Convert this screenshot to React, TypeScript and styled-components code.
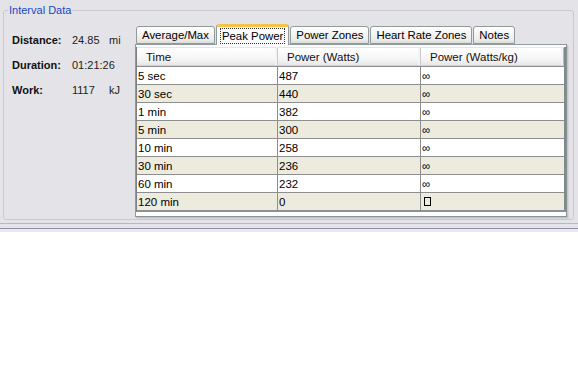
import React from "react";
import styled, { createGlobalStyle } from "styled-components";

const GlobalStyle = createGlobalStyle`
  html, body {
    margin: 0;
    padding: 0;
    background: #ffffff;
  }
  body {
    font-family: "Liberation Sans", Arial, sans-serif;
    font-size: 12px;
    color: #000;
  }
`;

const rows = [
  { time: "5 sec", watts: "487", perKg: "∞" },
  { time: "30 sec", watts: "440", perKg: "∞" },
  { time: "1 min", watts: "382", perKg: "∞" },
  { time: "5 min", watts: "300", perKg: "∞" },
  { time: "10 min", watts: "258", perKg: "∞" },
  { time: "30 min", watts: "236", perKg: "∞" },
  { time: "60 min", watts: "232", perKg: "∞" },
  { time: "120 min", watts: "0", perKg: null },
];

const tabs = ["Average/Max", "Peak Power", "Power Zones", "Heart Rate Zones", "Notes"];

const stats = [
  { label: "Distance:", value: "24.85", unit: "mi" },
  { label: "Duration:", value: "01:21:26", unit: "" },
  { label: "Work:", value: "1117", unit: "kJ" },
];

export default function App() {
  return (
    <>
      <GlobalStyle />
      <Page>
        <Top>
          <Group>
            <Legend>Interval Data</Legend>
            <Body>
              <Stats>
                {stats.map((s) => (
                  <StatRow key={s.label}>
                    <StatLabel>{s.label}</StatLabel>
                    <StatValue>{s.value}</StatValue>
                    <StatUnit>{s.unit}</StatUnit>
                  </StatRow>
                ))}
              </Stats>
              <TabControl>
                <TabStrip>
                  {tabs.map((t) => (
                    <Tab key={t} $active={t === "Peak Power"}>
                      <TabText $active={t === "Peak Power"}>{t}</TabText>
                    </Tab>
                  ))}
                </TabStrip>
                <TabPanel>
                  <Grid>
                    <HeaderRow>
                      <HeadCell>Time</HeadCell>
                      <HeadCell>Power (Watts)</HeadCell>
                      <HeadCell>Power (Watts/kg)</HeadCell>
                    </HeaderRow>
                    {rows.map((r, i) => (
                      <Row key={r.time} $alt={i % 2 === 1}>
                        <Cell>{r.time}</Cell>
                        <Cell>{r.watts}</Cell>
                        <Cell>{r.perKg ?? <Tofu />}</Cell>
                      </Row>
                    ))}
                  </Grid>
                </TabPanel>
              </TabControl>
            </Body>
          </Group>
        </Top>
        <Splitter />
      </Page>
    </>
  );
}

const Page = styled.div`
  width: 578px;
  height: 384px;
  background: #fff;
`;

const Top = styled.div`
  background: #e4e4e8;
  padding: 3px 4px 3px 3px;
`;

const Group = styled.fieldset`
  margin: 0;
  padding: 0 6px 4px 8px;
  border: 1px solid #c9c9cf;
  border-radius: 3px;
  min-width: 0;
  height: 211px;
  box-sizing: content-box;
`;

const Legend = styled.legend`
  padding: 0 1px;
  margin-left: -4px;
  color: #1848c4;
  font-size: 11px;
  line-height: 14px;
`;

const Body = styled.div`
  display: flex;
  padding-top: 8px;
`;

const Stats = styled.div`
  width: 126px;
  display: flex;
  flex-direction: column;
  gap: 11px;
  padding-top: 8px;
`;

const StatRow = styled.div`
  display: grid;
  grid-template-columns: 60px 37px auto;
  height: 14px;
  align-items: center;
  font-size: 11px;
`;

const StatLabel = styled.span`
  font-weight: bold;
  color: #111;
`;

const StatValue = styled.span`
  color: #222;
`;

const StatUnit = styled.span`
  color: #222;
`;

const TabControl = styled.div`
  width: 432px;
  display: flex;
  flex-direction: column;
`;

const TabStrip = styled.div`
  display: flex;
  align-items: flex-end;
  height: 19px;
  padding-left: 1px;
  gap: 1px;
  position: relative;
  z-index: 1;
`;

const Tab = styled.div<{ $active?: boolean }>`
  height: ${(p) => (p.$active ? "21px" : "18px")};
  margin-bottom: ${(p) => (p.$active ? "-1px" : "0")};
  padding: 0 4px;
  display: flex;
  align-items: center;
  border: 1px solid #919b9c;
  border-bottom: ${(p) => (p.$active ? "none" : "1px solid #919b9c")};
  border-top: ${(p) => (p.$active ? "3px solid #f7c24a" : "1px solid #919b9c")};
  border-radius: 3px 3px 0 0;
  background: ${(p) =>
    p.$active ? "#fcfcfe" : "linear-gradient(#ffffff, #ececea 80%, #dcdcd8)"};
  box-sizing: border-box;
  font-size: 11.4px;
  color: #000;
  white-space: nowrap;
`;

const TabText = styled.span<{ $active?: boolean }>`
  outline: ${(p) => (p.$active ? "1px dotted #333" : "none")};
  padding: 0 1px;
  line-height: 14px;
`;

const TabPanel = styled.div`
  height: 173px;
  border: 1px solid #919b9c;
  border-right-color: #8a9294;
  border-bottom-color: #8a9294;
  box-shadow: 1px 1px 0 #c4c4c8, 2px 2px 0 #d4d4d8;
  background: #fcfcfe;
  padding: 2px 1px 0 0;
  box-sizing: border-box;
`;

const Grid = styled.div`
  width: 430px;
  border-left: 1px solid #7f7f7f;
  border-right: 2px solid #7f8a8c;
  border-bottom: 2px solid #8a9294;
  box-sizing: border-box;
`;

const HeaderRow = styled.div`
  display: grid;
  grid-template-columns: 141px 143px 1fr;
  height: 19px;
  background: linear-gradient(#ffffff, #f4f4f6 70%, #e6e6ea);
  border-top: 1px solid #e6e6ea;
  border-bottom: 1px solid #d2d2d6;
  box-sizing: border-box;
`;

const HeadCell = styled.div`
  display: flex;
  align-items: center;
  padding-left: 9px;
  font-size: 11.5px;
  color: #111;
  border-right: 1px solid #c8c8cc;
  box-shadow: inset -2px 0 0 #f4f4f6;
  &:last-child {
    border-right: 1px solid #b8b8bc;
  }
`;

const Row = styled.div<{ $alt?: boolean }>`
  display: grid;
  grid-template-columns: 141px 143px 1fr;
  height: 18px;
  background: ${(p) => (p.$alt ? "#ecebdd" : "#ffffff")};
  border-top: 1px solid #8e8e8e;
  box-sizing: border-box;
`;

const Cell = styled.div`
  display: flex;
  align-items: center;
  padding-left: 1px;
  font-size: 11.5px;
  color: #000;
  border-right: 1px solid #8e8e8e;
  &:last-child {
    border-right: none;
  }
`;

const Tofu = styled.span`
  display: inline-block;
  width: 5px;
  height: 7px;
  margin-left: 2px;
  border: 1px solid #000;
`;

const Splitter = styled.div`
  height: 4px;
  background: #e4e4e8;
  border-top: 1px solid #b4b8c8;
  border-bottom: 1px solid #8c90a0;
  box-shadow: 0 3px 0 #e8e8ee;
`;
